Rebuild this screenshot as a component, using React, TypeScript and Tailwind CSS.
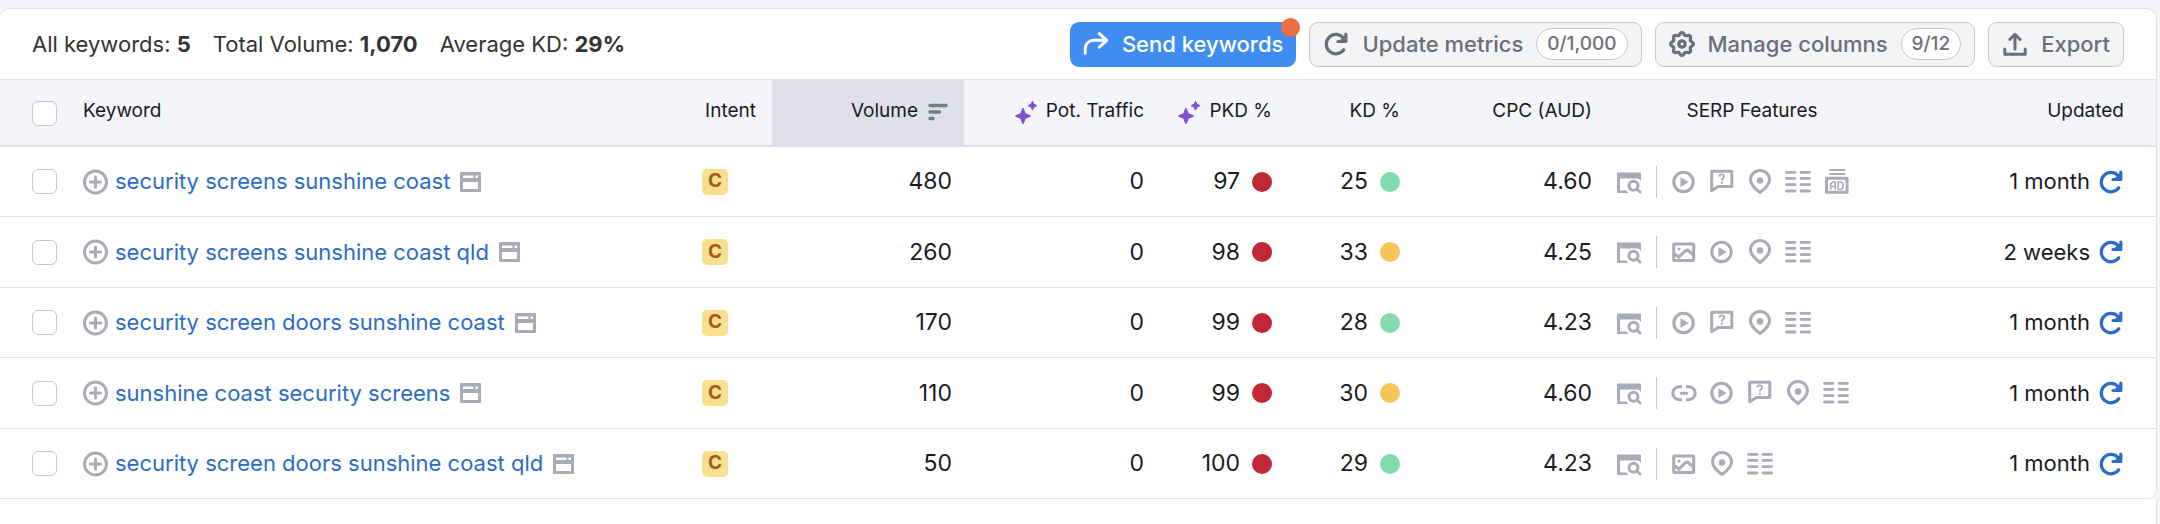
import React from "react";

type Feature = "video" | "faq" | "pin" | "sitelinks" | "ads" | "image" | "link";

interface Row {
  keyword: string;
  volume: number;
  traffic: number;
  pkd: number;
  kd: number;
  kdTone: "green" | "yellow";
  cpc: string;
  features: Feature[];
  updated: string;
}

const rows: Row[] = [
  { keyword: "security screens sunshine coast", volume: 480, traffic: 0, pkd: 97, kd: 25, kdTone: "green", cpc: "4.60", features: ["video", "faq", "pin", "sitelinks", "ads"], updated: "1 month" },
  { keyword: "security screens sunshine coast qld", volume: 260, traffic: 0, pkd: 98, kd: 33, kdTone: "yellow", cpc: "4.25", features: ["image", "video", "pin", "sitelinks"], updated: "2 weeks" },
  { keyword: "security screen doors sunshine coast", volume: 170, traffic: 0, pkd: 99, kd: 28, kdTone: "green", cpc: "4.23", features: ["video", "faq", "pin", "sitelinks"], updated: "1 month" },
  { keyword: "sunshine coast security screens", volume: 110, traffic: 0, pkd: 99, kd: 30, kdTone: "yellow", cpc: "4.60", features: ["link", "video", "faq", "pin", "sitelinks"], updated: "1 month" },
  { keyword: "security screen doors sunshine coast qld", volume: 50, traffic: 0, pkd: 100, kd: 29, kdTone: "green", cpc: "4.23", features: ["image", "pin", "sitelinks"], updated: "1 month" },
];

function Icon({ children }: { children: React.ReactNode }) {
  return (
    <svg viewBox="0 0 26 26" fill="none" stroke="currentColor" className="block h-[26px] w-[26px] shrink-0" aria-hidden="true">
      {children}
    </svg>
  );
}

function FeatureIcon({ name }: { name: Feature }) {
  switch (name) {
    case "video":
      return (
        <Icon>
          <circle cx="12.5" cy="13" r="9.7" strokeWidth="3" />
          <path d="M9.500 8.300v9.600l8.200-4.800z" fill="currentColor" stroke="none" />
        </Icon>
      );
    case "faq":
      return (
        <Icon>
          <path d="M2.700 2.200v19.600l6.600-4.400h13.500V2.200z" strokeWidth="3" strokeLinejoin="round" />
          <path d="M10.300 7.600c0-3 4.800-3 4.800 0 0 1.900-2.300 1.800-2.300 4" strokeWidth="1.800" />
          <path d="M11.800 12.800h2v2h-2z" fill="currentColor" stroke="none" />
        </Icon>
      );
    case "pin":
      return (
        <Icon>
          <path d="M13 23.500c-5-3.700-9.500-7.500-9.500-12.500a9.500 9.500 0 0 1 19 0c0 5-4.500 8.800-9.500 12.500z" strokeWidth="3" strokeLinejoin="round" />
          <circle cx="13" cy="11.500" r="3.300" fill="currentColor" stroke="none" />
        </Icon>
      );
    case "sitelinks":
      return (
        <Icon>
          <path d="M1.500 3.300h8.500M16 3.300h8.500M1.500 9.300h8.500M16 9.300h8.500M1.500 15.600h8.500M16 15.600h8.500M1.500 22h8.500M16 22h8.500" strokeWidth="2.800" strokeLinecap="round" />
        </Icon>
      );
    case "ads":
      return (
        <Icon>
          <path d="M7 1h14.500M7 5h14.500" strokeWidth="1.800" strokeLinecap="round" />
          <path d="M3.500 9.300h20.600v14H3.500z" strokeWidth="3" strokeLinejoin="round" />
          <path d="M7.700 20.500v-5.500l2-2h2.500v7.500M7.700 17.500h4.500M15.200 13h2.800l2 2v3.500l-2 2h-2.800z" strokeWidth="1.700" />
        </Icon>
      );
    case "image":
      return (
        <Icon>
          <rect x="2.700" y="5" width="20" height="16.500" rx="1" strokeWidth="3" />
          <circle cx="8" cy="10" r="1.500" fill="currentColor" stroke="none" />
          <path d="M3.500 15l4.500 3 6-6 2.500-1 6 5" strokeWidth="3" />
        </Icon>
      );
    case "link":
      return (
        <Icon>
          <path d="M11 6.700H8.300a6.500 6.500 0 0 0 0 13H11M15 6.700h2.700a6.500 6.500 0 0 1 0 13H15" strokeWidth="3" />
          <path d="M10.300 13.200h5.400" strokeWidth="3" strokeLinecap="round" />
        </Icon>
      );
  }
}

function SerpIcon() {
  return (
    <Icon>
      <path d="M2 3.500h22a1 1 0 0 1 1 1V12a8 8 0 0 0-3-2.500H4V21.500h6.500l2 2.500H2a1 1 0 0 1-1-1V4.500a1 1 0 0 1 1-1z" fill="currentColor" stroke="none" />
      <circle cx="17.500" cy="16.800" r="4.500" strokeWidth="3" />
      <path d="M20.800 20l3.200 3" strokeWidth="3" strokeLinecap="round" />
    </Icon>
  );
}

function RefreshIcon() {
  return (
    <Icon>
      <path d="M20.800 18.800a9.700 9.700 0 1 1-.6-12.200" strokeWidth="3.200" strokeLinecap="round" />
      <path d="M22.800 3.200v7.300h-7.800" strokeWidth="3.200" strokeLinecap="round" strokeLinejoin="round" />
      <path d="M17.500 9l4-4v4z" fill="currentColor" strokeWidth="1" />
    </Icon>
  );
}

const GEAR_TEETH = 8;
const gearOutline =
  Array.from({ length: 96 }, (_, i) => {
    const angle = (i / 96) * Math.PI * 2;
    const radius = 10.2 + 1.2 * Math.cos(GEAR_TEETH * angle);
    const x = (13 + radius * Math.sin(angle)).toFixed(2);
    const y = (13 - radius * Math.cos(angle)).toFixed(2);
    return `${i === 0 ? "M" : "L"}${x} ${y}`;
  }).join("") + "Z";

function Sparkles() {
  return (
    <svg viewBox="0 0 23 24" className="block h-6 w-[23px] shrink-0 text-[#7f4fd6]" fill="currentColor" stroke="currentColor" strokeLinejoin="round" aria-hidden="true">
      <path d="M7.700 8.500h.6l2 5.200 5 2v.6l-5 2-2 5.200h-.6l-2-5.200-5-2v-.6l5-2z" />
      <path d="M17.300 1.500h.4l1.200 2.800 2.800 1.200v.4l-2.800 1.200-1.200 2.800h-.4l-1.200-2.800-2.800-1.200v-.4l2.800-1.200z" />
    </svg>
  );
}

function Check({ label }: { label: string }) {
  return (
    <input
      type="checkbox"
      aria-label={label}
      className="block h-[25px] w-[25px] appearance-none rounded-[6px] border border-[#c4c7cf] bg-white checked:bg-[#3f8df3]"
    />
  );
}

function Stat({ label, value }: { label: string; value: string }) {
  return (
    <span>
      {label} <b className="font-bold">{value}</b>
    </span>
  );
}

const greyButton =
  "flex h-[45px] items-center gap-[13px] rounded-[9px] border border-[#c4c7cf] bg-[#f3f4f6] px-[13px] font-medium text-[#6c6e79]";
const pill =
  "flex h-8 items-center rounded-full border border-[#c4c7cf] bg-white px-[10px] text-[19px]";

function Toolbar() {
  return (
    <div className="flex h-[70px] items-center justify-between px-8 text-[22px]">
      <div className="flex gap-[22px] text-[#333333]">
        <Stat label="All keywords:" value="5" />
        <Stat label="Total Volume:" value="1,070" />
        <Stat label="Average KD:" value="29%" />
      </div>
      <div className="flex gap-[13px]">
        <button type="button" className="relative flex h-[45px] items-center gap-[13px] rounded-[9px] bg-[#3f8df3] px-[13px] font-medium text-white">
          <Icon>
            <path d="M2.200 22.300v-4.500a8.500 8.500 0 0 1 8.500-8.500h12.500M16.300 2.700l7.500 6.700-7.500 6.800" strokeWidth="3" strokeLinecap="round" strokeLinejoin="round" />
          </Icon>
          Send keywords
          <span className="absolute -top-1 -right-1 h-[19px] w-[19px] rounded-full bg-[#ed6e40]" />
        </button>
        <button type="button" className={greyButton}>
          <RefreshIcon />
          Update metrics
          <span className={pill}>0/1,000</span>
        </button>
        <button type="button" className={greyButton}>
          <Icon>
            <path d={gearOutline} strokeWidth="3.200" strokeLinejoin="round" />
            <circle cx="13" cy="13" r="3.100" strokeWidth="3.400" />
          </Icon>
          Manage columns
          <span className={pill}>9/12</span>
        </button>
        <button type="button" className={greyButton}>
          <Icon>
            <path d="M2.800 18v5.200h20.400V18M13 18V4M7.800 8.500L13 3.300l5.200 5.200" strokeWidth="3" strokeLinecap="round" strokeLinejoin="round" />
          </Icon>
          Export
        </button>
      </div>
    </div>
  );
}

const th = "h-[68px] border-t border-b-2 border-t-[#e0e1e9] border-b-[#dfe0e8] p-0 pb-[2px] font-normal";
const td = "border-b border-[#dfe0e8] p-0";
const numeric = "pr-3 text-right text-[23px]";

function Score({ value, dot }: { value: number; dot: string }) {
  return (
    <div className="flex items-center justify-end gap-3 pr-3 text-[23px]">
      {value}
      <span className={`h-5 w-5 rounded-full ${dot}`} />
    </div>
  );
}

export default function App() {
  return (
    <div className="min-h-screen bg-[#f4f5f9] pt-2 font-['Inter',sans-serif] text-[#191b23]">
      <div className="mr-[3px] flex min-h-[516px] flex-col">
        <div className="overflow-hidden rounded-t-[10px] rounded-br-[10px] border-t border-r border-[#dfe0e8] bg-white">
          <Toolbar />
          <table className="w-full table-fixed border-separate border-spacing-0 text-[22px]">
            <colgroup>
              <col className="w-[83px]" />
              <col />
              <col className="w-[82px]" />
              <col className="w-48" />
              <col className="w-48" />
              <col className="w-32" />
              <col className="w-32" />
              <col className="w-48" />
              <col className="w-[296px]" />
              <col className="w-64" />
            </colgroup>
            <thead className="bg-[#f4f5f9] text-[19px]">
              <tr>
                <th className={`${th} pl-8`}>
                  <div className="pt-1">
                    <Check label="Select all keywords" />
                  </div>
                </th>
                <th className={`${th} text-left`}>Keyword</th>
                <th className={`${th} pr-4 text-right`}>Intent</th>
                <th className={`${th} bg-[#dfe0e9]`}>
                  <div className="flex items-center justify-end gap-[10px] pr-4">
                    Volume
                    <svg viewBox="0 0 20 18" className="block h-[18px] w-5" fill="none" stroke="#6b7f85" strokeWidth="3.4" strokeLinecap="round" aria-hidden="true">
                      <path d="M2 2.500h16M2 9h9.500M2 15.500h3" />
                    </svg>
                  </div>
                </th>
                <th className={th}>
                  <div className="flex items-center justify-end gap-2 pr-3">
                    <Sparkles />
                    Pot. Traffic
                  </div>
                </th>
                <th className={th}>
                  <div className="flex items-center justify-end gap-2 pr-3">
                    <Sparkles />
                    PKD %
                  </div>
                </th>
                <th className={`${th} pr-3 text-right`}>KD %</th>
                <th className={`${th} pr-3 text-right`}>CPC (AUD)</th>
                <th className={`${th} text-center`}>SERP Features</th>
                <th className={`${th} pr-8 text-right`}>Updated</th>
              </tr>
            </thead>
            <tbody>
              {rows.map((row) => (
                <tr key={row.keyword} className="h-[70px] even:h-[71px]">
                  <td className={`${td} pl-8`}>
                    <Check label={`Select ${row.keyword}`} />
                  </td>
                  <td className={td}>
                    <div className="flex items-center whitespace-nowrap">
                      <button type="button" aria-label={`Add ${row.keyword}`} className="text-[#a9abb6]">
                        <Icon>
                          <circle cx="12.500" cy="13" r="11" strokeWidth="3" />
                          <path d="M12.500 8v10M7.500 13h10" strokeWidth="3" strokeLinecap="round" />
                        </Icon>
                      </button>
                      <a href="#keyword" className="ml-[6px] text-[#2b6cc8]">
                        {row.keyword}
                      </a>
                      <button type="button" aria-label={`Open results for ${row.keyword}`} className="ml-[10px] text-[#a9abb6]">
                        <svg viewBox="0 0 21 20" className="block h-5 w-[21px]" fill="currentColor" aria-hidden="true">
                          <path fillRule="evenodd" d="M1 0h19a1 1 0 0 1 1 1v18a1 1 0 0 1-1 1H1a1 1 0 0 1-1-1V1a1 1 0 0 1 1-1zM3 3.500v2.500h10.500V3.500zM15.500 3.500v2.500h2.500V3.500zM3 10v7h15v-7z" />
                        </svg>
                      </button>
                    </div>
                  </td>
                  <td className={td}>
                    <span className="ml-3 flex h-[26px] w-[26px] items-center justify-center rounded-[5px] bg-[#f8e08e] text-[19px] font-bold text-[#a05a1c]">C</span>
                  </td>
                  <td className={`${td} ${numeric}`}>{row.volume}</td>
                  <td className={`${td} ${numeric}`}>{row.traffic}</td>
                  <td className={td}>
                    <Score value={row.pkd} dot="bg-[#bf2834]" />
                  </td>
                  <td className={td}>
                    <Score value={row.kd} dot={row.kdTone === "green" ? "bg-[#81dbae]" : "bg-[#f4c65a]"} />
                  </td>
                  <td className={`${td} ${numeric}`}>{row.cpc}</td>
                  <td className={td}>
                    <div className="flex items-center pl-3 text-[#a9abb6]">
                      <SerpIcon />
                      <span className="mx-[14px] h-8 w-px bg-[#c4c7cf]" />
                      <div className="flex gap-3">
                        {row.features.map((feature) => (
                          <FeatureIcon key={feature} name={feature} />
                        ))}
                      </div>
                    </div>
                  </td>
                  <td className={td}>
                    <div className="flex items-center justify-end gap-2 pr-8">
                      {row.updated}
                      <button type="button" aria-label={`Refresh ${row.keyword}`} className="text-[#2b6cc8]">
                        <RefreshIcon />
                      </button>
                    </div>
                  </td>
                </tr>
              ))}
            </tbody>
          </table>
        </div>
        <div className="flex-1 border-r border-[#dfe0e8] bg-white" />
      </div>
    </div>
  );
}
